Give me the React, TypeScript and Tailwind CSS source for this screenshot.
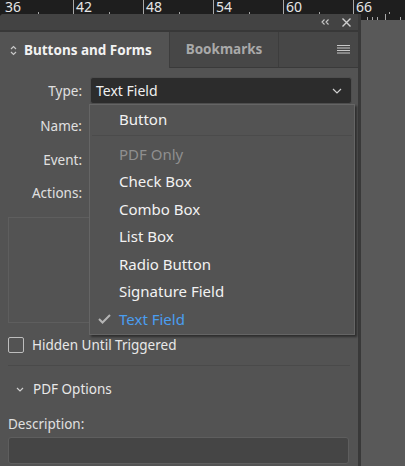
import React from "react";

const rulerMarks = ["36", "42", "48", "54", "60", "66"];
const menuItems = ["Check Box", "Combo Box", "List Box", "Radio Button", "Signature Field"];

const Ruler = () => (
  <div className="flex h-[14px] shrink-0 bg-[#1e1e1e] pl-[3px] overflow-hidden">
    {rulerMarks.map((n, i) => (
      <div
        key={n}
        className={`relative shrink-0 w-[70px] h-full ${i > 0 ? "border-l border-[#a8a8a8]" : ""}`}
      >
        <span className="absolute left-[2px] top-0 text-[14px] leading-[14px] text-[#e6e6e6]">{n}</span>
        <span className="absolute left-[35px] bottom-0 w-px h-[2px] bg-[#a8a8a8]" />
      </div>
    ))}
  </div>
);

const FieldLabel = ({ children }: { children: React.ReactNode }) => (
  <div className="w-[82px] shrink-0 text-right text-[13.5px] leading-[20px] text-[#e0e0e0]">{children}</div>
);

export default function App() {
  return (
    <div
      className="w-[405px] h-[466px] overflow-hidden bg-[#1e1e1e] flex flex-col"
      style={{ fontFamily: '"Noto Sans", "Open Sans", sans-serif' }}
    >
      <Ruler />
      <div className="flex flex-1 min-h-0">
        {/* panel */}
        <div className="w-[361px] shrink-0 flex flex-col bg-[#535353] border-r-[3px] border-[#393939] rounded-tl-[4px] relative">
          {/* title bar */}
          <div className="h-[18px] shrink-0 bg-[#434343] rounded-tl-[4px] flex items-center justify-end gap-[13px] pr-[7px] border-b-2 border-[#383838]">
            <svg width="8" height="6" viewBox="0 0 8 6">
              <path d="M3.5 0.5 L1 3 L3.5 5.5 M7.5 0.5 L5 3 L7.5 5.5" stroke="#c8c8c8" strokeWidth="1.1" fill="none" />
            </svg>
            <svg width="9" height="9" viewBox="0 0 9 9">
              <path d="M0.5 0.5 L8.5 8.5 M8.5 0.5 L0.5 8.5" stroke="#cfcfcf" strokeWidth="1.4" />
            </svg>
          </div>
          {/* tabs */}
          <div className="h-[36px] shrink-0 flex bg-[#474747]">
            <div className="w-[170px] bg-[#535353] flex items-center pl-[10px] gap-[7px] border-r border-[#3d3d3d]">
              <svg width="7" height="11" viewBox="0 0 7 11">
                <path d="M1 4 L3.5 1.5 L6 4 M1 7 L3.5 9.5 L6 7" stroke="#c8c8c8" strokeWidth="1.2" fill="none" />
              </svg>
              <span className="text-[13.5px] font-bold text-[#f2f2f2]">Buttons and Forms</span>
            </div>
            <div className="w-[109px] flex items-center justify-center border-r border-[#3d3d3d] border-b border-b-[#3a3a3a]">
              <span className="text-[13.5px] font-bold text-[#a9a9a9]">Bookmarks</span>
            </div>
            <div className="flex-1 flex items-center justify-end pr-[8px] border-b border-[#3a3a3a]">
              <svg width="13" height="11" viewBox="0 0 13 11">
                <path d="M0 1.5 H13 M0 4 H13 M0 6.5 H13 M0 9 H13" stroke="#c8c8c8" strokeWidth="1.2" />
              </svg>
            </div>
          </div>

          {/* body */}
          <div className="flex flex-col pl-[8px] pr-[6px] pt-[9px]">
            <div className="flex items-center gap-[8px] h-[27px] shrink-0 -ml-[8px]">
              <FieldLabel>Type:</FieldLabel>
              <div className="w-[262px] shrink-0 h-[27px] bg-[#2c2c2c] border border-[#4e4e4e] rounded-[3px] flex items-center justify-between pl-[5px] pr-[9px]">
                <span className="text-[14px] leading-[20px] text-[#f0f0f0]">Text Field</span>
                <svg width="10" height="6" viewBox="0 0 10 6">
                  <path d="M1 1 L5 5 L9 1" stroke="#d0d0d0" strokeWidth="1.2" fill="none" />
                </svg>
              </div>
            </div>
            <div className="flex items-center h-[26px] shrink-0 mt-[9px] -ml-[8px]">
              <FieldLabel>Name:</FieldLabel>
            </div>
            <div className="flex items-center h-[26px] shrink-0 mt-[8px] -ml-[8px]">
              <FieldLabel>Event:</FieldLabel>
            </div>
            <div className="flex items-center h-[26px] shrink-0 mt-[7px] -ml-[8px]">
              <FieldLabel>Actions:</FieldLabel>
            </div>
            <div className="h-[106px] shrink-0 mt-[11px] border border-[#5e5e5e] mr-[2px]" />

            <div className="flex items-center gap-[8px] h-[16px] shrink-0 mt-[14px]">
              <div className="w-[16px] h-[16px] rounded-[2px] border-[1.5px] border-[#bdbdbd]" />
              <span className="text-[13.5px] leading-[20px] text-[#e8e8e8]">Hidden Until Triggered</span>
            </div>
            <div className="h-px shrink-0 bg-[#4a4a4a] mt-[12px] mr-[2px]" />
            <div className="flex items-center gap-[9px] h-[20px] shrink-0 mt-[13px] pl-[8px]">
              <svg width="8" height="5" viewBox="0 0 8 5">
                <path d="M1 1 L4 4 L7 1" stroke="#d0d0d0" strokeWidth="1.2" fill="none" />
              </svg>
              <span className="text-[13.5px] leading-[20px] text-[#e8e8e8]">PDF Options</span>
            </div>
            <div className="mt-[15px] h-[20px] shrink-0 text-[13.5px] leading-[20px] text-[#e0e0e0]">Description:</div>
            <div className="mt-[3px] h-[27px] shrink-0 w-[341px] bg-[#454545] border border-[#5e5e5e] rounded-[3px]" />
          </div>

          {/* open dropdown menu */}
          <div className="absolute left-[89px] top-[90px] w-[266px] bg-[#535353] border border-[#656565] shadow-[2px_2px_2px_rgba(0,0,0,0.45)] pb-[1px]">
            <div className="h-[28px] flex items-center pl-[29px] text-[15px] text-[#f2f2f2]">Button</div>
            <div className="h-[7px] flex items-start pt-[2px] px-[2px]">
              <div className="h-px w-full bg-[#4b4b4b]" />
            </div>
            <div className="h-[27.5px] flex items-center pl-[29px] text-[15px] text-[#8f8f8f]">PDF Only</div>
            {menuItems.map((m) => (
              <div key={m} className="h-[27.5px] flex items-center pl-[29px] text-[15px] text-[#f2f2f2]">
                {m}
              </div>
            ))}
            <div className="h-[27.5px] flex items-center text-[15px] text-[#4a9ef0]">
              <div className="w-[29px] flex justify-center">
                <svg width="13" height="10" viewBox="0 0 13 10">
                  <path d="M1 5 L4.5 8.5 L12 1" stroke="#b5b5b5" strokeWidth="2" fill="none" />
                </svg>
              </div>
              Text Field
            </div>
          </div>
        </div>
        {/* right side */}
        <div className="flex-1 flex flex-col">
          <div className="h-[6px] shrink-0 bg-[#1e1e1e] flex items-end gap-[4px] pl-[6px]">
            <span className="w-px h-[3px] bg-[#a8a8a8]" />
            <span className="w-px h-[3px] bg-[#a8a8a8]" />
            <span className="w-px h-[3px] bg-[#a8a8a8]" />
            <span className="w-px h-[6px] bg-[#a8a8a8] ml-[3px]" />
            <span className="w-px h-[3px] bg-[#a8a8a8] ml-[10px]" />
          </div>
          <div className="flex-1 bg-[#595959]" />
        </div>
      </div>
    </div>
  );
}
